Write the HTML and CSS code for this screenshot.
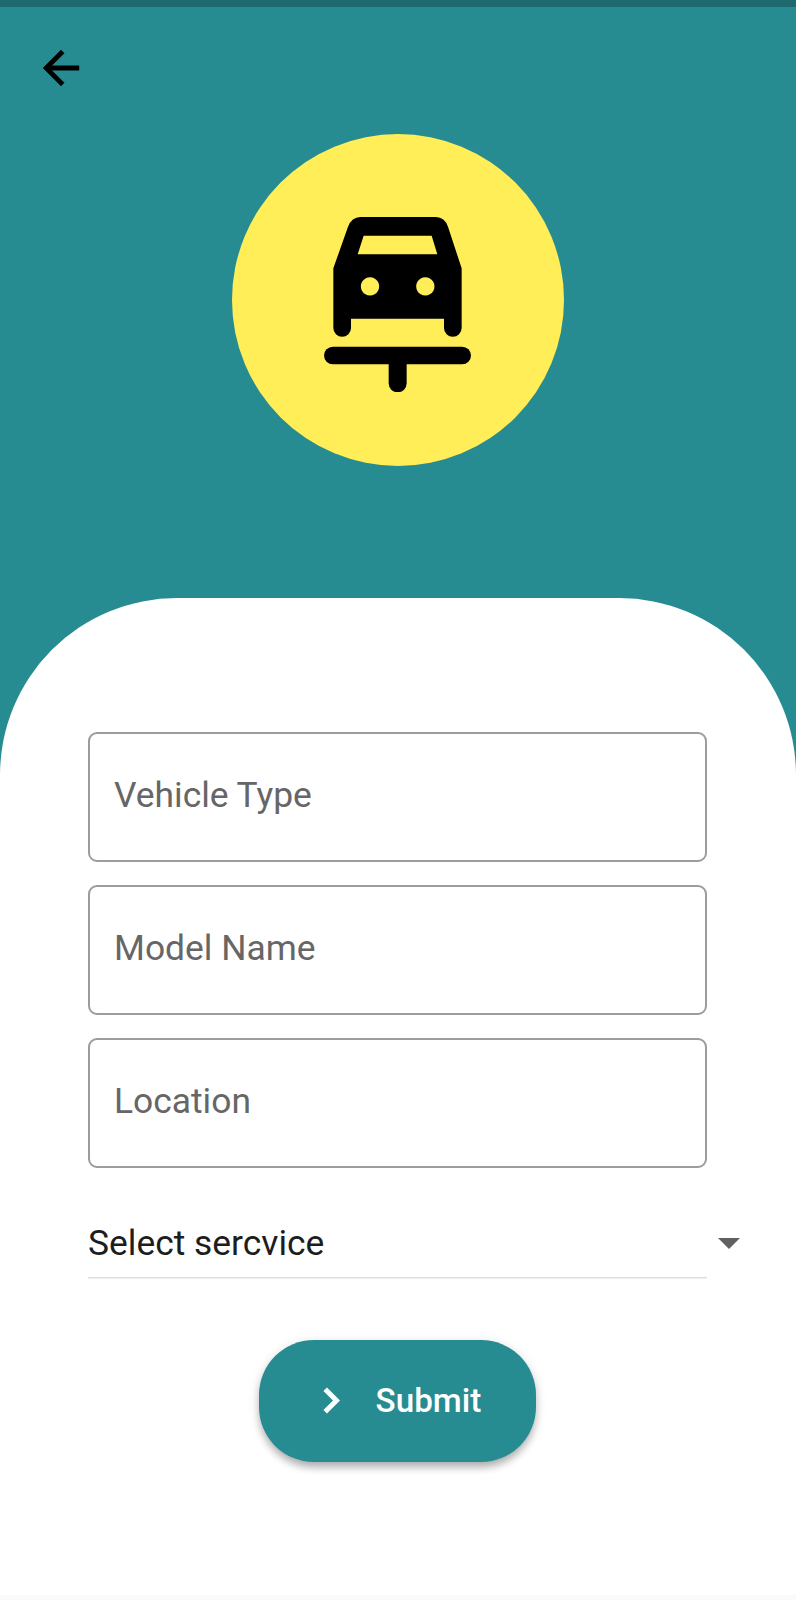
FILE: index.html
```html
<!DOCTYPE html>
<html lang="en">
<head>
<meta charset="utf-8">
<title>Service request</title>
<link rel="stylesheet" href="styles.css">
</head>
<body>
<div class="screen">
  <div class="status-bar"></div>
  <header class="hero">
    <button class="back" aria-label="Back">
      <svg width="36" height="36" viewBox="4 4 16 16"><path d="M20 11H7.83l5.59-5.59L12 4l-8 8 8 8 1.41-1.41L7.83 13H20z"/></svg>
    </button>
    <div class="badge">
      <svg class="car" viewBox="312 289 441 526">
        <path fill-rule="evenodd" d="M340 443L384 318Q395 290 421 289H648Q674 290 684 318L725 443V622a26.5 26.5 0 0 1-53 0V594H393V622a26.5 26.5 0 0 1-53 0ZM431 345L413 401H652L635 345ZM450 469.500a27.500 27.500 0 1 0 .01 0ZM616 469.500a27.500 27.500 0 1 0 .01 0Z"/>
        <rect x="312" y="678" width="441" height="53" rx="26.500"/>
        <path d="M506 720H560V788a27 27 0 0 1-54 0Z"/>
      </svg>
    </div>
  </header>
  <main class="sheet">
    <form class="form">
      <div class="field">Vehicle Type</div>
      <div class="field">Model Name</div>
      <div class="field">Location</div>
      <div class="select">
        <span class="select-label">Select sercvice</span>
        <svg class="caret" width="22" height="11" viewBox="0 0 22 11"><path d="M0 0H22L11 11Z"/></svg>
      </div>
      <button class="submit" type="button">
        <svg class="chevron" width="17" height="27" viewBox="0 0 17 27"><path d="M2.200 2.200L13.500 13.500L2.200 24.800"/></svg>
        <span>Submit</span>
      </button>
    </form>
  </main>
  <div class="nav-edge"></div>
</div>
</body>
</html>
```
FILE: styles.css
```css
* { box-sizing: border-box; }
body { margin: 0; background: #278c91; font-family: Roboto, "Liberation Sans", sans-serif; }
button { border: 0; padding: 0; background: none; font: inherit; }
svg { display: block; }
.screen { width: 796px; height: 1600px; display: flex; flex-direction: column; overflow: hidden; background: #278c91; }
.status-bar { height: 6.700px; background: #1f6a6f; flex: none; }
.hero { height: 591.800px; flex: none; display: flex; flex-direction: column; }
.back { width: 36px; height: 36px; margin: 43.800px 0 0 43px; }
.back svg { stroke: #000; stroke-width: .2; overflow: visible; }
.badge { width: 332px; height: 332px; margin: 47.200px 0 0 231.600px; padding: 83px 0 0 92.400px; border-radius: 50%; background: #ffee58; }
.car { width: 147px; height: 175.300px; }
.sheet { flex: 1; background: #fff; border-radius: 177px 177px 0 0; padding: 133.500px 89px 0 88px; }
.form { display: flex; flex-direction: column; gap: 23px; }
.field { height: 130px; border: 2px solid #9c9c9c; border-radius: 9px; padding: 0 24px; display: flex; align-items: center; font-size: 35.400px; line-height: 42px; color: #666; padding-bottom: 4px; }
.select { height: 88px; margin-right: -33px; display: flex; justify-content: space-between; align-items: center; padding-top: 17px; background: linear-gradient(#dedede, #dedede) left bottom / 619px 1.500px no-repeat; }
.select-label { font-size: 35.400px; line-height: 42px; color: #1d1d1d; }
.caret { fill: #616161; }
.submit { width: 277px; height: 122px; margin: 38px 0 0 171px; padding-left: 64px; border-radius: 55px; display: flex; align-items: center; background: #278c91; color: #fff; font-size: 33.200px; font-weight: 500; box-shadow: 0 7px 9px -2px rgba(0,0,0,.2), 0 4px 8px rgba(0,0,0,.12), 0 2px 14px rgba(0,0,0,.08); }
.submit span { margin-left: 35.600px; }
.chevron { fill: none; stroke: #fff; stroke-width: 5; }
.nav-edge { height: 5px; background: #fafafa; flex: none; }
```
